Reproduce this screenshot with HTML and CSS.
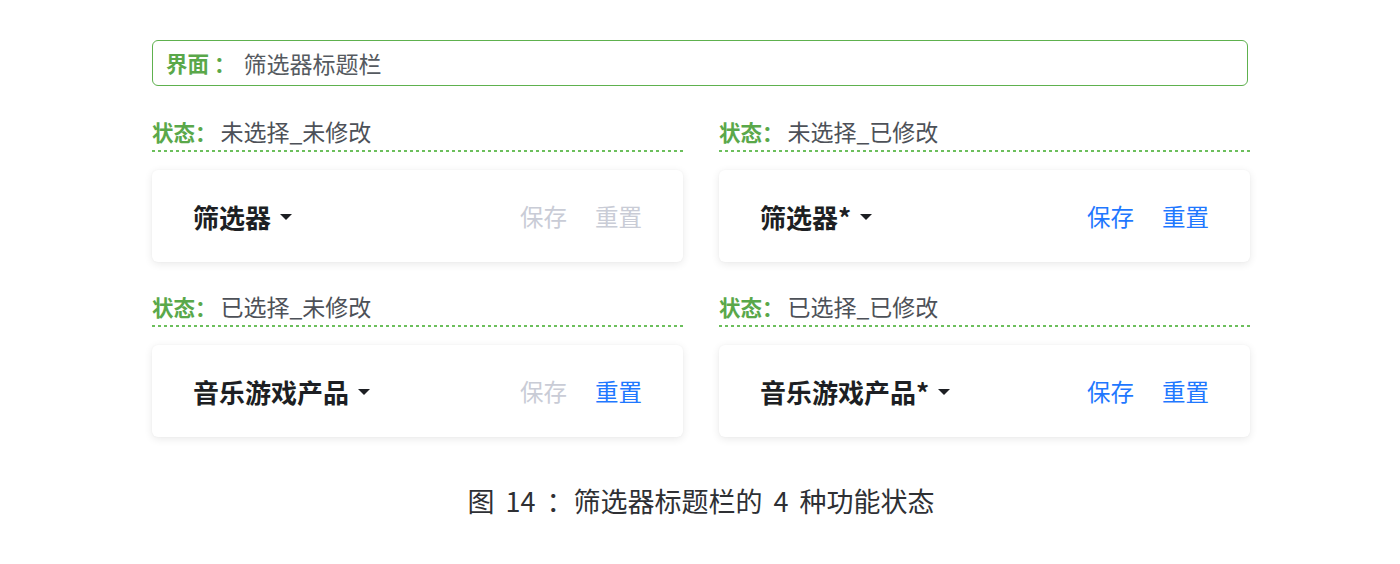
FILE: index.html
```html
<!DOCTYPE html>
<html lang="zh-CN">
<head>
<meta charset="utf-8">
<title>筛选器标题栏</title>
<link rel="stylesheet" href="styles.css">
</head>
<body>
<div class="page">
  <div class="iface">
    <span class="iface-label">界面 ：</span>
    <span class="iface-value">筛选器标题栏</span>
  </div>
  <div class="grid">
    <div class="block">
      <div class="status"><span class="status-label">状态：</span><span class="status-value">未选择_未修改</span></div>
      <div class="card">
        <div class="title">筛选器<span class="caret"></span></div>
        <div class="actions"><span class="btn off">保存</span><span class="btn off">重置</span></div>
      </div>
    </div>
    <div class="block">
      <div class="status"><span class="status-label">状态：</span><span class="status-value">未选择_已修改</span></div>
      <div class="card">
        <div class="title">筛选器*<span class="caret"></span></div>
        <div class="actions"><span class="btn on">保存</span><span class="btn on">重置</span></div>
      </div>
    </div>
    <div class="block">
      <div class="status"><span class="status-label">状态：</span><span class="status-value">已选择_未修改</span></div>
      <div class="card">
        <div class="title">音乐游戏产品<span class="caret"></span></div>
        <div class="actions"><span class="btn off">保存</span><span class="btn on">重置</span></div>
      </div>
    </div>
    <div class="block">
      <div class="status"><span class="status-label">状态：</span><span class="status-value">已选择_已修改</span></div>
      <div class="card">
        <div class="title">音乐游戏产品*<span class="caret"></span></div>
        <div class="actions"><span class="btn on">保存</span><span class="btn on">重置</span></div>
      </div>
    </div>
  </div>
  <div class="caption">图 14 ：筛选器标题栏的 4 种功能状态</div>
</div>
</body>
</html>
```

FILE: styles.css
```css
* { box-sizing: border-box; }
html, body {
  margin: 0;
  padding: 0;
  background: #ffffff;
}
body {
  font-family: "Noto Sans CJK SC", "Noto Sans", sans-serif;
  color: #4a4a4a;
}
.page {
  width: 1098px;
  margin: 0 auto;
  padding-top: 40px;
  position: relative;
  left: 1px;
}
.iface {
  width: 1096px;
  height: 46px;
  border: 1.5px solid #5eb14e;
  border-radius: 6px;
  display: flex;
  align-items: center;
  padding-left: 13px;
  line-height: 28px;
}
.iface-label {
  color: #5aa84a;
  font-weight: 700;
  font-size: 21.5px;
  margin-right: 8px;
}
.iface-value {
  color: #555a60;
  font-size: 23px;
}
.grid {
  display: grid;
  grid-template-columns: 531px 531px;
  column-gap: 36px;
  row-gap: 30px;
  margin-top: 31px;
}
.status {
  line-height: 28px;
  padding-bottom: 5px;
  height: 35px;
  position: relative;
}
.status::after {
  content: "";
  position: absolute;
  left: 0;
  right: 0;
  bottom: 0;
  height: 2px;
  background-image: linear-gradient(to right, #6cbf5c 50%, transparent 50%);
  background-size: 6px 2px;
  background-repeat: repeat-x;
}
.status-label {
  color: #5aa84a;
  font-weight: 700;
  font-size: 21.5px;
  margin-right: 4px;
}
.status-value {
  color: #4d5158;
  font-size: 23px;
}
.card {
  margin-top: 18px;
  height: 92px;
  background: #ffffff;
  border-radius: 6px;
  box-shadow: 0 2px 8px rgba(0, 0, 0, 0.09), 0 0 2px rgba(0, 0, 0, 0.04);
  display: flex;
  align-items: center;
  justify-content: space-between;
  padding: 0 41px;
}
.title {
  font-size: 26px;
  font-weight: 700;
  color: #1d1f23;
  display: flex;
  align-items: center;
}
.caret {
  width: 0;
  height: 0;
  border-left: 6.5px solid transparent;
  border-right: 6.5px solid transparent;
  border-top: 6.5px solid #1d1f23;
  margin-left: 9px;
  margin-top: 2px;
}
.actions {
  display: flex;
  gap: 28px;
  font-size: 23.5px;
}
.btn.off { color: #c9ccd6; }
.btn.on { color: #1f78ff; }
.caption {
  margin-top: 48px;
  text-align: center;
  font-size: 27px;
  line-height: 32px;
  word-spacing: 5px;
  color: #2e3034;
}
```
